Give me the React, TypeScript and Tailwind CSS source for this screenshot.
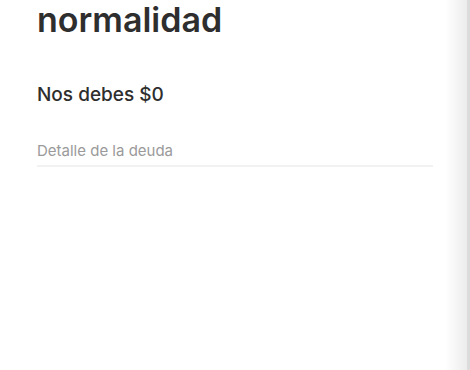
export default function App() {
  return (
    <div className="flex h-[370px] w-[470px] overflow-hidden bg-white font-['Inter',sans-serif]">
      <div className="flex-1 pl-[37px] pr-[12px]">
        <h1 className="text-[34px] font-semibold leading-[40px] text-[#2e2e2e]">
          normalidad
        </h1>
        <p className="mt-[43px] text-[19px] font-medium leading-[24px] text-[#2e2e2e]">
          Nos debes $0
        </p>
        <div className="mt-[34px] border-b-2 border-[#f2f2f2] pb-[4px] text-[15px] leading-[20px] text-[#9a9a9a]">
          Detalle de la deuda
        </div>
      </div>
      <div className="w-[22px] bg-gradient-to-r from-white to-[#ececec]" />
      <div className="w-[3px] bg-[#dcdcdc]" />
    </div>
  )
}
